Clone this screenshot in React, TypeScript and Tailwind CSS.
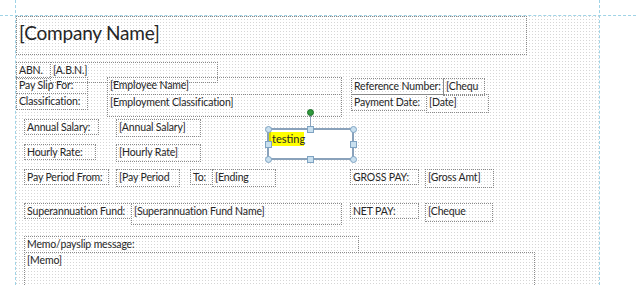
import React from "react";

type Box = { x: number; y: number; x2: number; y2: number; t: string };

const boxes: Box[] = [
  { x: 16, y: 62, x2: 50, y2: 78, t: "ABN." },
  { x: 50, y: 62, x2: 217, y2: 82, t: "[A.B.N.]" },
  { x: 16, y: 77, x2: 87, y2: 93, t: "Pay Slip For:" },
  { x: 107, y: 77, x2: 341, y2: 94, t: "[Employee Name]" },
  { x: 16, y: 93, x2: 87, y2: 109, t: "Classification:" },
  { x: 107, y: 94, x2: 341, y2: 116, t: "[Employment Classification]" },
  { x: 351, y: 78, x2: 443, y2: 94, t: "Reference Number:" },
  { x: 443, y: 78, x2: 484, y2: 95, t: "[Chequ" },
  { x: 351, y: 94, x2: 426, y2: 110, t: "Payment Date:" },
  { x: 426, y: 94, x2: 488, y2: 112, t: "[Date]" },
  { x: 24, y: 119, x2: 98, y2: 134, t: "Annual Salary:" },
  { x: 116, y: 119, x2: 200, y2: 136, t: "[Annual Salary]" },
  { x: 24, y: 144, x2: 95, y2: 159, t: "Hourly Rate:" },
  { x: 116, y: 144, x2: 200, y2: 161, t: "[Hourly Rate]" },
  { x: 24, y: 169, x2: 108, y2: 184, t: "Pay Period From:" },
  { x: 116, y: 169, x2: 179, y2: 186, t: "[Pay Period" },
  { x: 190, y: 169, x2: 212, y2: 184, t: "To:" },
  { x: 212, y: 169, x2: 275, y2: 186, t: "[Ending" },
  { x: 350, y: 169, x2: 418, y2: 184, t: "GROSS PAY:" },
  { x: 425, y: 169, x2: 493, y2: 187, t: "[Gross Amt]" },
  { x: 24, y: 203, x2: 131, y2: 218, t: "Superannuation Fund:" },
  { x: 131, y: 203, x2: 341, y2: 224, t: "[Superannuation Fund Name]" },
  { x: 350, y: 203, x2: 418, y2: 218, t: "NET PAY:" },
  { x: 425, y: 203, x2: 492, y2: 221, t: "[Cheque" },
  { x: 24, y: 236, x2: 358, y2: 252, t: "Memo/payslip message:" },
  { x: 24, y: 252, x2: 534, y2: 300, t: "[Memo]" },
];

const font = { fontFamily: 'Lato, "Noto Sans", "Liberation Sans", sans-serif' };

function Circle({ x, y }: { x: number; y: number }) {
  return (
    <div
      className="absolute w-[7px] h-[7px] rounded-full bg-[#c9e0ef] border border-[#7fa3c2]"
      style={{ left: x - 3, top: y - 3 }}
    />
  );
}
function Square({ x, y }: { x: number; y: number }) {
  return (
    <div
      className="absolute w-[7px] h-[7px] bg-[#c9e0ef] border border-[#7fa3c2]"
      style={{ left: x - 3, top: y - 3 }}
    />
  );
}

export default function App() {
  return (
    <div
      className="relative w-[636px] h-[285px] overflow-hidden bg-white text-[#262626]"
      style={font}
    >
      {/* design surface with dotted grid */}
      <div className="absolute left-[16px] top-[16px] w-[583px] h-[269px] bg-[linear-gradient(90deg,transparent_1px,#ffffff_1px),linear-gradient(#d6d6d6_1px,#ffffff_1px)] bg-[size:3px_3px]" />

      {/* guide lines */}
      <div className="absolute left-0 top-[15px] w-[636px] h-0 border-t border-dashed border-[#9fd3e6]" />
      <div className="absolute left-[15px] top-0 h-[285px] w-0 border-l border-dashed border-[#9fd3e6]" />
      <div className="absolute left-[599px] top-0 h-[285px] w-0 border-l border-dashed border-[#9fd3e6]" />

      {/* company name */}
      <div className="absolute left-[16px] top-[16px] w-[511px] h-[39px] border border-dotted border-[#8a8a8a] pl-[2px] pt-[3px] text-[19px] tracking-[-0.2px] leading-[26px]">
        [Company Name]
      </div>

      {boxes.map((b, i) => (
        <div
          key={i}
          className="absolute border border-dotted border-[#8a8a8a] pl-[2px] text-[10.5px] tracking-[-0.15px] leading-[14px] whitespace-nowrap overflow-hidden"
          style={{ left: b.x, top: b.y, width: b.x2 - b.x + 1, height: b.y2 - b.y + 1 }}
        >
          {b.t}
        </div>
      ))}

      {/* selected text box */}
      <div className="absolute left-[267px] top-[128px] w-[87px] h-[32px] border-2 border-[#8aa2bb] bg-white">
        <div className="absolute left-0 top-[2px] h-[14px] w-[35px] bg-[#ffff00]" />
        <div className="absolute left-0 top-[2px] h-[14px] w-[2px] bg-[#d8d800]" />
        <div className="absolute left-[3px] top-[2px] text-[11px] leading-[14px]">testing</div>
      </div>
      <div className="absolute left-[310px] top-[114px] w-0 h-[14px] border-l border-[#8aa2bb]" />
      <div
        className="absolute w-[7px] h-[7px] rounded-full bg-[#2f9a3c] border border-[#1f6e2a]"
        style={{ left: 307, top: 109 }}
      />
      <Circle x={268} y={129} />
      <Circle x={353} y={129} />
      <Circle x={268} y={159} />
      <Circle x={353} y={159} />
      <Square x={310} y={129} />
      <Square x={310} y={159} />
      <Square x={268} y={144} />
      <Square x={353} y={144} />
    </div>
  );
}
